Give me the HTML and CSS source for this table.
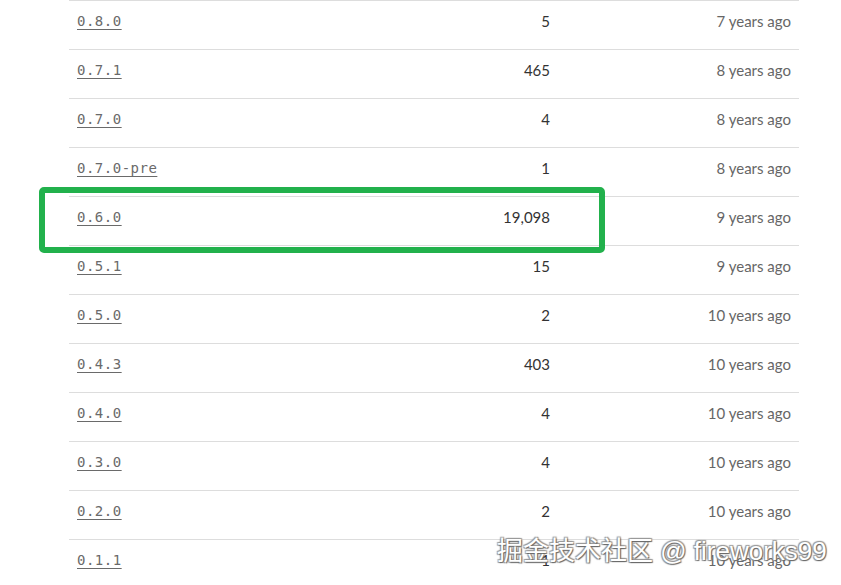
FILE: index.html
```html
<!DOCTYPE html>
<html lang="en">
<head>
<meta charset="utf-8">
<title>Versions</title>
<link rel="stylesheet" href="styles.css">
</head>
<body>
<main class="page">
  <div class="versions">
    <div class="row"><a class="ver" href="#">0.8.0</a><span class="dl">5</span><span class="date">7 years ago</span></div>
    <div class="row"><a class="ver" href="#">0.7.1</a><span class="dl">465</span><span class="date">8 years ago</span></div>
    <div class="row"><a class="ver" href="#">0.7.0</a><span class="dl">4</span><span class="date">8 years ago</span></div>
    <div class="row"><a class="ver" href="#">0.7.0-pre</a><span class="dl">1</span><span class="date">8 years ago</span></div>
    <div class="row"><a class="ver" href="#">0.6.0</a><span class="dl">19,098</span><span class="date">9 years ago</span></div>
    <div class="row"><a class="ver" href="#">0.5.1</a><span class="dl">15</span><span class="date">9 years ago</span></div>
    <div class="row"><a class="ver" href="#">0.5.0</a><span class="dl">2</span><span class="date">10 years ago</span></div>
    <div class="row"><a class="ver" href="#">0.4.3</a><span class="dl">403</span><span class="date">10 years ago</span></div>
    <div class="row"><a class="ver" href="#">0.4.0</a><span class="dl">4</span><span class="date">10 years ago</span></div>
    <div class="row"><a class="ver" href="#">0.3.0</a><span class="dl">4</span><span class="date">10 years ago</span></div>
    <div class="row"><a class="ver" href="#">0.2.0</a><span class="dl">2</span><span class="date">10 years ago</span></div>
    <div class="row"><a class="ver" href="#">0.1.1</a><span class="dl">1</span><span class="date">10 years ago</span></div>
  </div>
  <div class="highlight"></div>
  <div class="watermark">掘金技术社区 @ fireworks99</div>
</main>
</body>
</html>
```
FILE: styles.css
```css
html, body {
  margin: 0;
  padding: 0;
  background: #fff;
  overflow: hidden;
}
.page {
  position: relative;
  width: 841px;
  height: 585px;
  overflow: hidden;
}
.versions {
  margin-left: 69px;
  width: 730px;
}
.row {
  box-sizing: border-box;
  height: 49px;
  border-top: 1px solid #ddd;
  padding: 0 8px 8px 8px;
  display: grid;
  grid-template-columns: 1fr 130px 233px;
  align-items: center;
  font-family: Lato, "Open Sans", sans-serif;
  font-size: 15px;
}
.ver {
  font-family: "DejaVu Sans Mono", "Liberation Mono", monospace;
  font-size: 14px;
  letter-spacing: 0.5px;
  color: #6a6a6a;
  text-decoration: underline;
  text-underline-offset: 3px;
}
.dl {
  text-align: right;
  padding-right: 8px;
  color: #333;
}
.date {
  text-align: right;
  color: #666;
}
.highlight {
  position: absolute;
  left: 39px;
  top: 187px;
  width: 566px;
  height: 66px;
  box-sizing: border-box;
  border: 6px solid #22b14c;
  border-radius: 5px;
}
.watermark {
  position: absolute;
  left: 497px;
  top: 535px;
  font-family: "Liberation Sans", "Noto Sans CJK SC", sans-serif;
  font-size: 26px;
  line-height: 32px;
  color: #fff;
  white-space: nowrap;
  text-shadow: 1px 1px 1px #666, -1px -1px 1px #999, 1px -1px 1px #999, -1px 1px 1px #999;
}
```
